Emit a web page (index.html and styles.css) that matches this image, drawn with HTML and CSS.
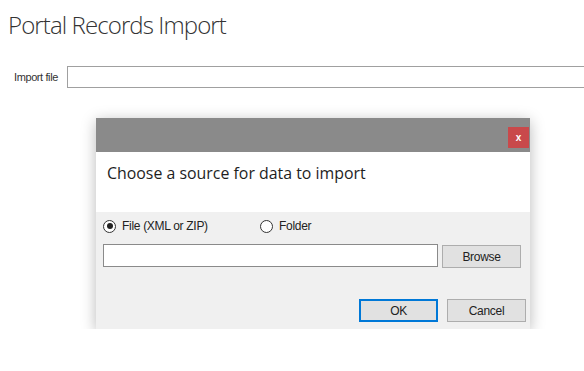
FILE: index.html
```html
<!DOCTYPE html>
<html lang="en">
<head>
  <meta charset="UTF-8" />
  <title>Portal Records Import</title>
  <link rel="stylesheet" href="styles.css">
</head>
<body>
  <h1 class="page-title">Portal Records Import</h1>

  <div class="import-row">
    <label class="import-label" for="import-file">Import file</label>
    <input type="text" id="import-file" class="import-input" />
  </div>

  <div class="dialog">
    <div class="dialog-titlebar">
      <button class="close-btn">x</button>
    </div>
    <div class="dialog-header">Choose a source for data to import</div>
    <div class="dialog-body">
      <div class="radio-row">
        <label class="radio radio-file"><span class="dot checked"></span>File (XML or ZIP)</label>
        <label class="radio"><span class="dot"></span>Folder</label>
      </div>
      <div class="path-row">
        <input type="text" class="path-input" />
        <button class="win-btn browse">Browse</button>
      </div>
      <div class="actions">
        <button class="win-btn ok">OK</button>
        <button class="win-btn">Cancel</button>
      </div>
    </div>
  </div>
</body>
</html>
```

FILE: styles.css
```css
body {
  margin: 0;
  background: #fff;
  font-family: 'Open Sans', sans-serif;
  color: #222;
  overflow: hidden;
}
.page-title {
  margin: 0;
  padding: 8px 0 0 8px;
  font-weight: 300;
  font-size: 24px;
  letter-spacing: -0.9px;
  line-height: 34px;
  color: #333;
}
.import-row {
  display: flex;
  align-items: center;
  margin-top: 24px;
  padding-left: 14px;
}
.import-label {
  font-family: 'Liberation Sans', sans-serif;
  font-size: 11px;
  letter-spacing: -0.4px;
  color: #333;
  width: 53px;
}
.import-input {
  flex: 1;
  height: 22px;
  box-sizing: border-box;
  border: 1px solid #a0a0a0;
  margin: 0 -10px 0 0;
  padding: 0;
}
.dialog {
  width: 434px;
  margin: 30px 0 0 96px;
  background: #f0f0f0;
  box-shadow: 0 3px 14px rgba(0,0,0,0.28);
}
.dialog-titlebar {
  height: 34px;
  background: #8a8a8a;
  display: flex;
  justify-content: flex-end;
  align-items: flex-start;
  padding-top: 9px;
  box-sizing: border-box;
}
.close-btn {
  width: 21px;
  height: 21px;
  border: none;
  background: #c9494b;
  color: #fff;
  font-family: 'Liberation Sans', sans-serif;
  font-weight: bold;
  font-size: 10px;
  padding: 0;
  margin-right: 1px;
}
.dialog-header {
  background: #fff;
  height: 60px;
  padding: 10px 0 0 11px;
  box-sizing: border-box;
  font-size: 15.9px;
  color: #1e1e1e;
}
.dialog-body {
  padding: 5px 0 7px 7px;
  font-family: 'Liberation Sans', sans-serif;
  font-size: 12px;
  letter-spacing: -0.3px;
}
.radio-row {
  display: flex;
  height: 18px;
  align-items: center;
}
.radio {
  display: flex;
  align-items: center;
  gap: 6px;
}
.radio-file {
  width: 157px;
}
.dot {
  width: 11px;
  height: 11px;
  border: 1px solid #333;
  border-radius: 50%;
  background: #fff;
  position: relative;
}
.dot.checked::after {
  content: "";
  position: absolute;
  left: 2.5px;
  top: 2.5px;
  width: 6px;
  height: 6px;
  border-radius: 50%;
  background: #222;
}
.path-row {
  display: flex;
  align-items: flex-start;
  margin-top: 9px;
}
.path-input {
  width: 335px;
  height: 23px;
  box-sizing: border-box;
  border: 1px solid #8a8a8a;
  margin: 0;
  padding: 0;
}
.win-btn {
  width: 79px;
  height: 23px;
  border: 1px solid #adadad;
  background: #e1e1e1;
  font-family: 'Liberation Sans', sans-serif;
  font-size: 12px;
  letter-spacing: -0.3px;
  color: #222;
  padding: 0;
}
.browse {
  margin: 1px 0 0 4px;
}
.actions {
  display: flex;
  justify-content: flex-end;
  gap: 9px;
  padding-right: 4px;
  margin-top: 31px;
}
.ok {
  border: 2px solid #0078d7;
}
```
